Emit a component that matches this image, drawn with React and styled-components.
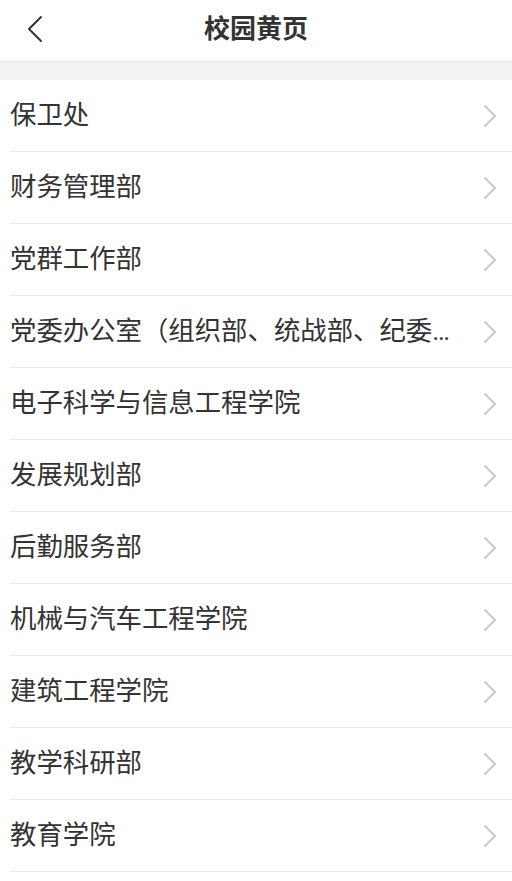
import React from 'react'
import styled, {createGlobalStyle} from 'styled-components'

const GlobalStyle = createGlobalStyle`
  html, body {
    margin: 0;
    padding: 0;
    background: #fff;
  }

  body {
    font-family: Roboto, "Noto Sans CJK SC", "Noto Sans", sans-serif;
    color: #333;
  }
`

const Page = styled.div`
  width: 512px;
  min-height: 881px;
  background: #fff;
`

const Header = styled.header`
  position: relative;
  height: 61px;
  display: flex;
  align-items: center;
  justify-content: center;
  border-bottom: 1px solid #e6e6e6;
`

const BackButton = styled.button`
  position: absolute;
  left: 21px;
  top: 11px;
  width: 26px;
  height: 36px;
  padding: 0;
  border: 0;
  background: none;
  display: flex;
  align-items: center;
  justify-content: center;
`

const Title = styled.h1`
  margin: 0;
  font-size: 26px;
  font-weight: 700;
  color: #333;
  line-height: 1;
  margin-top: -3px;
`

const Gap = styled.div`
  height: 18px;
  background: #f2f2f2;
`

const List = styled.ul`
  list-style: none;
  margin: 0;
  padding: 0;
`

const Row = styled.li`
  height: 71px;
  margin-left: 10px;
  padding-right: 15px;
  display: flex;
  align-items: center;
  border-bottom: 1px solid #ebebeb;
`

const Label = styled.span`
  flex: 1;
  min-width: 0;
  font-size: 26.4px;
  line-height: 1.2;
  color: #333;
  white-space: nowrap;
  overflow: hidden;
  text-overflow: ellipsis;
  margin-right: 20px;
`

const Chevron = ({color = '#c8c8c8'}) => (
  <svg width="14" height="24" viewBox="0 0 14 24" fill="none">
    <path d="M2 2 L12 12 L2 22" stroke={color} strokeWidth="2" strokeLinecap="round" strokeLinejoin="round"/>
  </svg>
)

const BackIcon = () => (
  <svg width="17" height="28" viewBox="0 0 17 28" fill="none">
    <path d="M15 2 L3 14 L15 26" stroke="#333" strokeWidth="2" strokeLinecap="round" strokeLinejoin="round"/>
  </svg>
)

const units = [
  '保卫处',
  '财务管理部',
  '党群工作部',
  '党委办公室（组织部、统战部、纪委办公室、监察处）',
  '电子科学与信息工程学院',
  '发展规划部',
  '后勤服务部',
  '机械与汽车工程学院',
  '建筑工程学院',
  '教学科研部',
  '教育学院',
]

export default function App() {
  return (
    <>
      <GlobalStyle/>
      <Page>
        <Header>
          <BackButton aria-label="返回">
            <BackIcon/>
          </BackButton>
          <Title>校园黄页</Title>
        </Header>
        <Gap/>
        <List>
          {units.map(name => (
            <Row key={name}>
              <Label>{name}</Label>
              <Chevron/>
            </Row>
          ))}
        </List>
      </Page>
    </>
  )
}
